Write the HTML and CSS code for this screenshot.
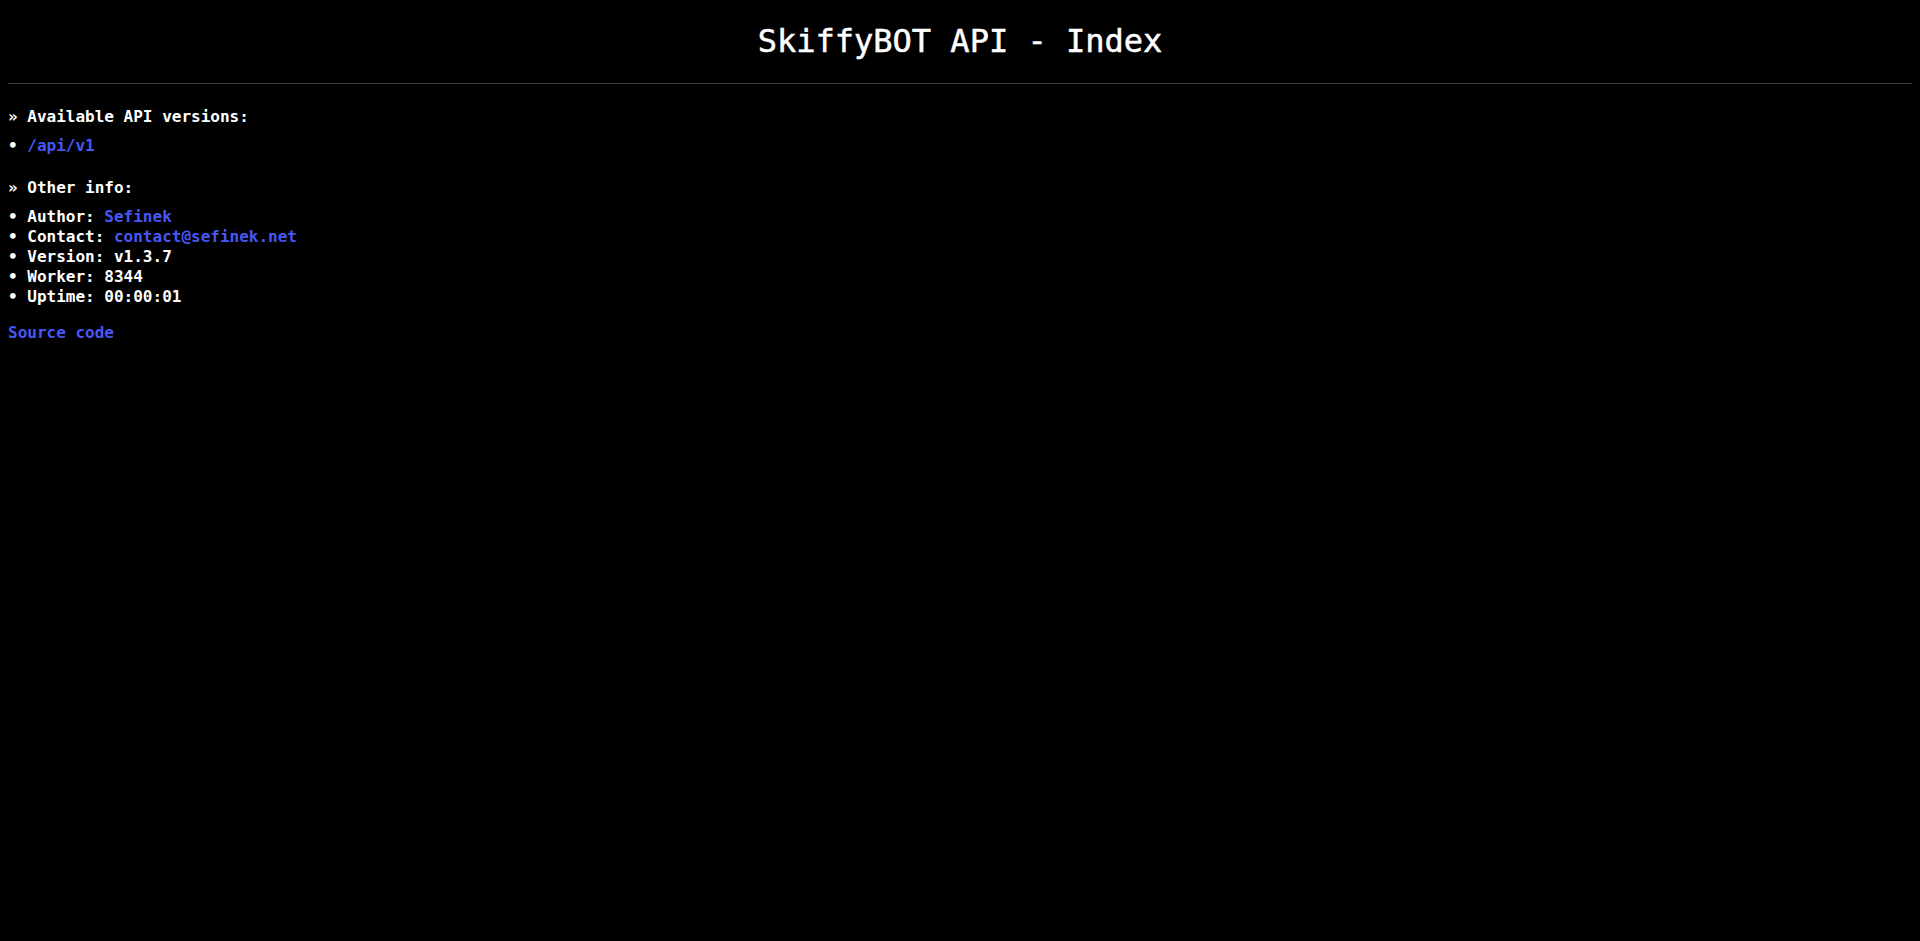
FILE: index.html
```html
<!DOCTYPE html>
<html lang="en">
<head>
<meta charset="utf-8">
<title>SkiffyBOT API - Index</title>
<link rel="stylesheet" href="styles.css">
</head>
<body>
<header class="header">
  <h1 class="title">SkiffyBOT API - Index</h1>
</header>
<hr class="divider">
<main class="content">
  <section class="section">
    <h2 class="section-title">» Available API versions:</h2>
    <ul class="list">
      <li class="list-item"><a class="link" href="#">/api/v1</a></li>
    </ul>
  </section>
  <section class="section">
    <h2 class="section-title">» Other info:</h2>
    <ul class="list">
      <li class="list-item">Author: <a class="link" href="#">Sefinek</a></li>
      <li class="list-item">Contact: <a class="link" href="#">contact@sefinek.net</a></li>
      <li class="list-item">Version: v1.3.7</li>
      <li class="list-item">Worker: 8344</li>
      <li class="list-item">Uptime: 00:00:01</li>
    </ul>
  </section>
  <p class="footer"><a class="link" href="#">Source code</a></p>
</main>
</body>
</html>
```
FILE: styles.css
```css
html, body {
  background: #000;
}

body {
  margin: 0;
  padding: 0 8px;
  color: #fff;
  font-family: "DejaVu Sans Mono", "Liberation Mono", monospace;
  font-size: 16px;
  line-height: 20px;
  font-weight: bold;
}

.header {
  padding-top: 22px;
}

.title {
  margin: 0;
  font-size: 32px;
  line-height: 38px;
  font-weight: normal;
  text-align: center;
  -webkit-text-stroke: 0.5px #fff;
}

.divider {
  margin: 23px 0 0;
  border: 0;
  border-top: 1px solid #3a3a3a;
  height: 0;
}

.content {
  display: flex;
  flex-direction: column;
  gap: 22px;
  padding-top: 23px;
}

.section {
  display: flex;
  flex-direction: column;
  gap: 9px;
}

.section-title {
  margin: 0;
  font-size: 16px;
  line-height: 20px;
  font-weight: bold;
}

.list {
  margin: 0;
  padding: 0;
  list-style: none;
}

.list-item::before {
  content: "• ";
}

.link {
  color: #4757f5;
  text-decoration: none;
  font-weight: bold;
}

.footer {
  margin: -6px 0 0;
}
```
